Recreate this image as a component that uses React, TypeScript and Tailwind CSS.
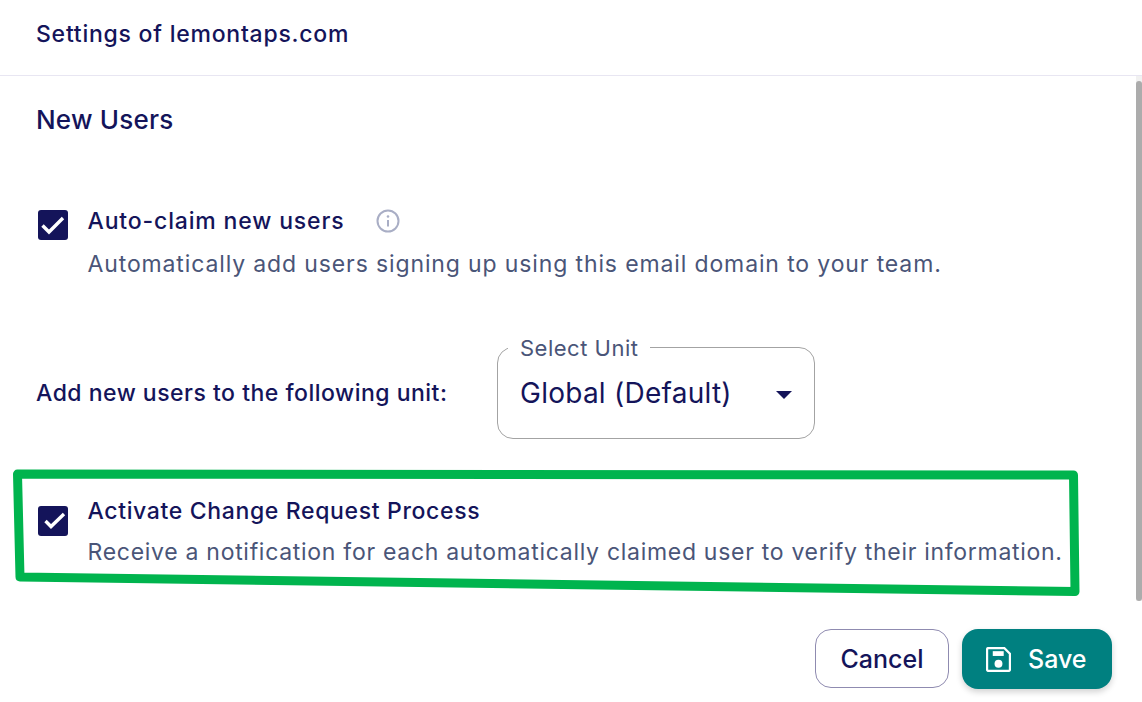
const navy = "text-[#14145a]";

function CheckRow({
  title,
  text,
  checkPath,
  checkClass,
  titleClass,
  textClass,
  children,
}: {
  title: string;
  text: string;
  checkPath: string;
  checkClass: string;
  titleClass: string;
  textClass: string;
  children?: React.ReactNode;
}) {
  return (
    <div className="flex items-start">
      <div className={`ml-[2px] size-[30px] shrink-0 rounded-[3px] bg-[#14145a] ${checkClass}`}>
        <svg viewBox="0 0 30 30" className="size-[30px]" fill="none" stroke="#fff" strokeWidth="3.4">
          <path d={checkPath} />
        </svg>
      </div>
      <div className="ml-[19.5px]">
        <div className="flex h-[30px] items-center">
          <span className={`text-[23px] font-medium ${navy} ${titleClass}`}>{title}</span>
          {children}
        </div>
        <p className={`h-[30px] whitespace-nowrap text-[23px] leading-[30px] text-[#4a5578] ${textClass}`}>
          {text}
        </p>
      </div>
    </div>
  );
}

export default function App() {
  return (
    <div className="relative flex h-[702px] w-[1142px] flex-col overflow-hidden bg-white font-['Inter',sans-serif]">
      <header className="flex h-[76px] shrink-0 items-center border-b border-[#e8e6f2] px-9 pb-[7px]">
        <h1 className={`text-[23px] font-medium tracking-[0.76px] ${navy}`}>Settings of lemontaps.com</h1>
      </header>

      <div className="flex h-[525px] shrink-0">
        <main className="min-w-0 flex-1 pl-9">
          <h2 className={`mt-[27px] h-[34px] text-[26px] font-medium leading-[34px] tracking-[0.2px] ${navy}`}>
            New Users
          </h2>
          <div className="mt-[69px]">
            <CheckRow
              title="Auto-claim new users"
              text="Automatically add users signing up using this email domain to your team."
              checkPath="M4.5 15.5l6.5 6.5L25 8"
              checkClass="mt-[4px]"
              titleClass="tracking-[0.85px]"
              textClass="mt-[13px] tracking-[0.87px]"
            >
              <svg viewBox="0 0 24 24" className="ml-[32px] size-[24px]" fill="none" stroke="#a9aec5" strokeWidth="2">
                <circle cx="12" cy="12" r="10.5" />
                <path d="M12 11v6.5" />
                <circle cx="12" cy="7.5" r="1.3" fill="#a9aec5" stroke="none" />
              </svg>
            </CheckRow>
          </div>

          <div className="mt-[68px] flex items-center">
            <span className={`w-[461px] text-[23px] font-medium tracking-[0.5px] ${navy}`}>
              Add new users to the following unit:
            </span>
            <fieldset className="relative -mt-[11px] h-[103px] w-[318px] rounded-[16px] border border-[#a3a3a3] pl-[10px]">
              <legend className="h-[22px] px-[12px] text-[22px] leading-[24px] tracking-[0.5px] text-[#4a5578]">
                Select Unit
              </legend>
              <div className={`ml-[12px] mt-[17px] flex items-center text-[28px] leading-[36px] tracking-[0.25px] ${navy}`}>
                Global (Default)
              </div>
              <span className="absolute right-[22px] top-[33px] size-0 border-x-[8px] border-t-[8px] border-x-transparent border-t-[#14145a]" />
            </fieldset>
          </div>

          <div className="mt-[57px]">
            <CheckRow
              title="Activate Change Request Process"
              text="Receive a notification for each automatically claimed user to verify their information."
              checkPath="M7.5 15l5.5 5.5L26 8"
              checkClass="mt-[10px]"
              titleClass="tracking-[0.65px]"
              textClass="mt-[11px] tracking-[0.71px]"
            />
          </div>
        </main>
        <div className="w-[6px] shrink-0 bg-[#f1f1f1]">
          <div className="mt-[5px] h-[520px] rounded-[6px] bg-[#acacac]" />
        </div>
      </div>

      <footer className="flex justify-end gap-[13px] pr-[30px] pt-[28px]">
        <button className={`h-[59px] w-[134px] rounded-[16px] border border-[#8f8bb0] pt-[2px] text-[25px] font-medium ${navy}`}>
          Cancel
        </button>
        <button className="flex h-[60px] w-[150px] items-center rounded-[16px] bg-[#008080] pl-[24px] text-[25px] font-medium text-white shadow-[0_3px_6px_rgba(0,0,0,0.18)]">
          <svg viewBox="0 0 24 24" className="size-[25px]" fill="none" stroke="#fff" strokeWidth="2.2">
            <path d="M1 2.5A1.5 1.5 0 0 1 2.5 1H17.5L23 6.5v15a1.5 1.5 0 0 1-1.5 1.5h-19A1.5 1.5 0 0 1 1 21.5z" />
            <rect x="6.5" y="4" width="10.5" height="4.6" fill="#fff" stroke="none" />
            <circle cx="12" cy="16" r="3.8" fill="#fff" stroke="none" />
          </svg>
          <span className="ml-[17px] pt-[2px]">Save</span>
        </button>
      </footer>

      {/* hand-drawn annotation on top of the screenshot */}
      <svg className="pointer-events-none absolute left-0 top-0" width="1142" height="702" fill="none">
        <path
          d="M17.5 474L1073.5 475L1075 591.5L20 577Z"
          stroke="#00b44e"
          strokeWidth="9"
          strokeLinejoin="round"
        />
      </svg>
    </div>
  );
}
